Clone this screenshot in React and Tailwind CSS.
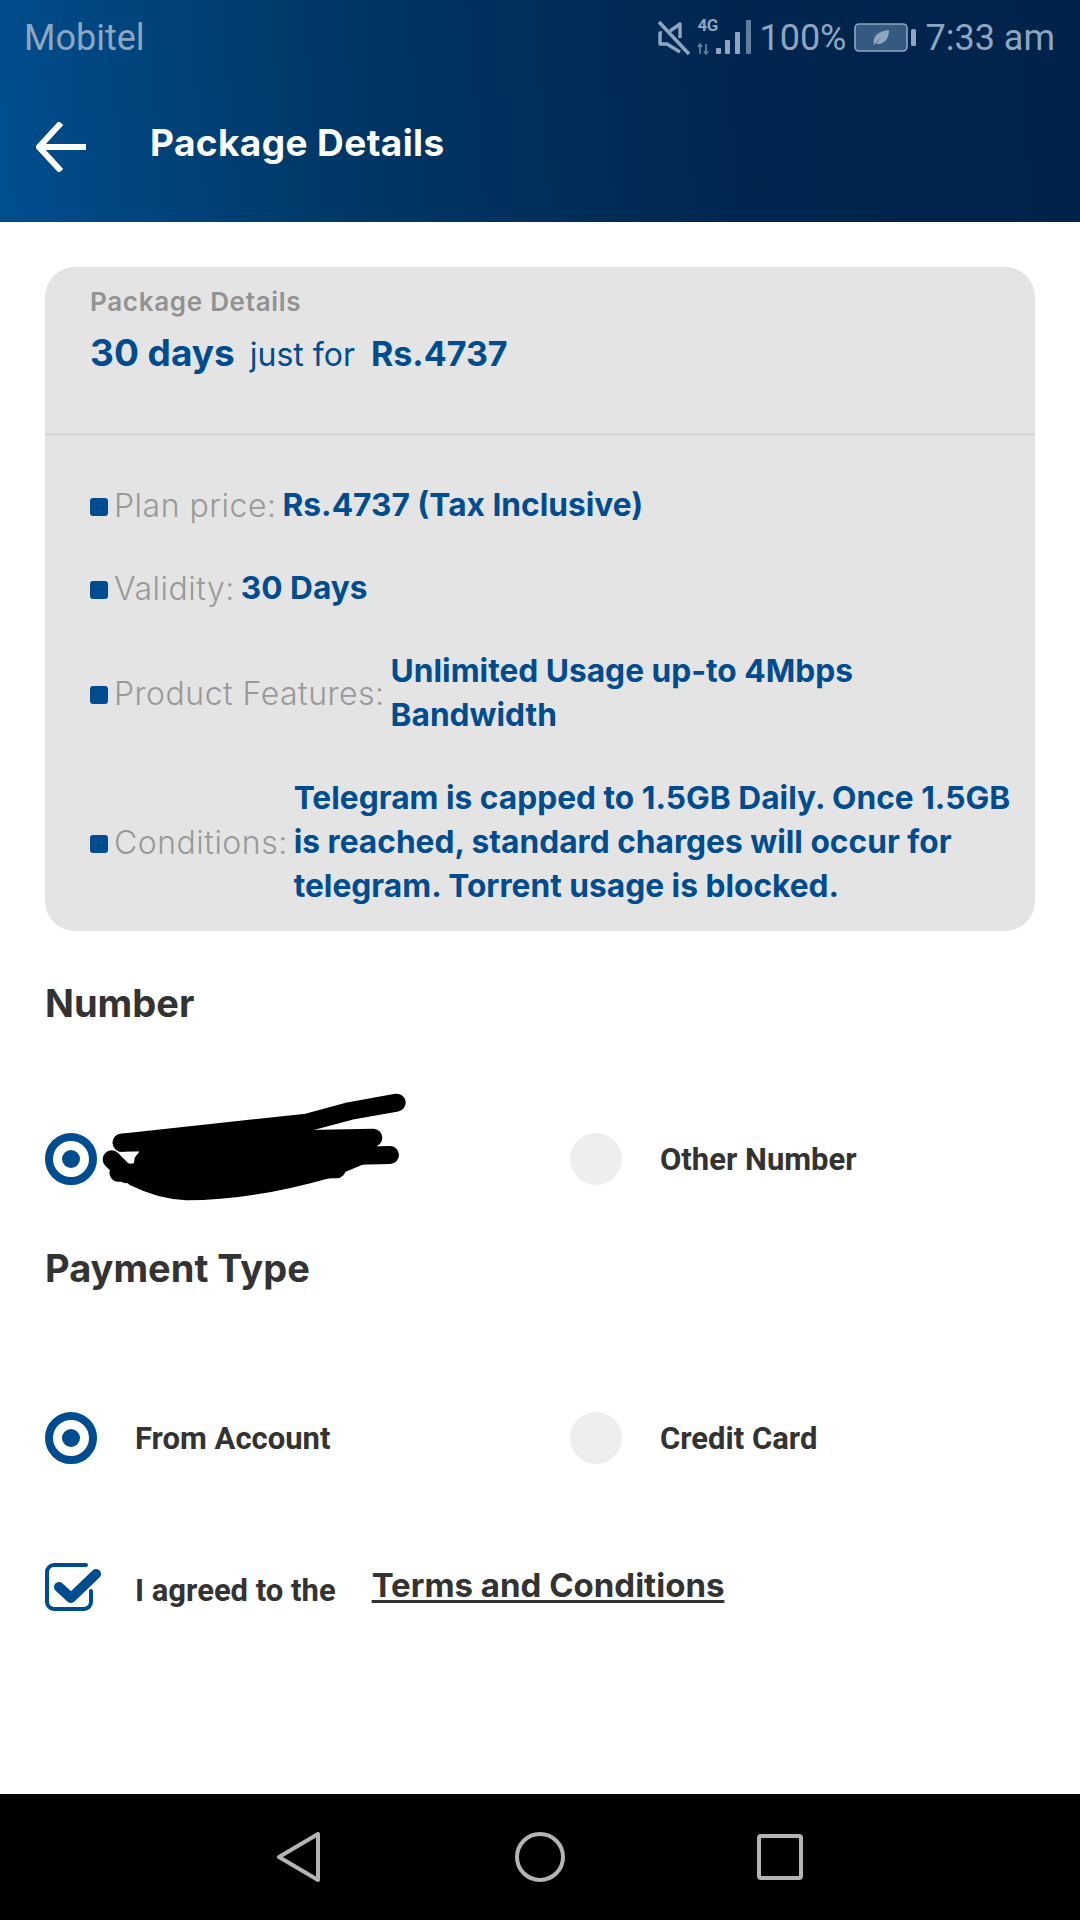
import React from 'react';

const heading = "font-['Inter','Noto_Sans',sans-serif]";
const label = "font-['Roboto',sans-serif]";

function SelectedRadio() {
    return (
        <div className="w-[52px] h-[52px] shrink-0 rounded-full border-[8px] border-[#004c91] flex items-center justify-center">
            <div className="w-[18px] h-[18px] rounded-full bg-[#004c91]"></div>
        </div>
    );
}

function EmptyRadio() {
    return <div className="w-[52px] h-[52px] shrink-0 rounded-full bg-[#eeeeee]"></div>;
}

function StatusIcons() {
    return (
        <div className="flex items-center text-[#8fa6c0]">
            {/* muted speaker */}
            <svg width="34" height="36" viewBox="0 0 34 36" fill="none" stroke="currentColor" strokeWidth="3.4" className="mr-[6px]">
                <path d="M2 2 L32 34" />
                <path d="M5 13 H3 V24 H10 L23 32 M13 11 L23 4 V18" strokeLinejoin="round" />
            </svg>
            {/* network type and signal bars */}
            <div className="relative w-[55px] h-[36px] mr-[7px]">
                <span className="absolute left-0 top-[-4px] text-[17px] font-bold leading-[18px] tracking-[-0.5px] font-['Roboto',sans-serif]">4G</span>
                <svg width="55" height="36" viewBox="0 0 55 36" className="absolute inset-0">
                    <path d="M3 34 V24 M1 27 L3 24 L5 27 M9 24 V34 M7 31 L9 34 L11 31" fill="none" stroke="#5f7d9c" strokeWidth="1.8" />
                    <rect x="19" y="28" width="5" height="6" rx="1" fill="currentColor" />
                    <rect x="28" y="20" width="5" height="14" rx="1" fill="currentColor" />
                    <rect x="38" y="12" width="5" height="22" rx="1" fill="currentColor" />
                    <rect x="49" y="0" width="5" height="34" rx="1" fill="#5f7d9c" />
                </svg>
            </div>
            <span className="text-[36px] leading-none mr-[7px] font-['Roboto',sans-serif] font-normal">100%</span>
            {/* battery with power saving leaf */}
            <svg width="62" height="30" viewBox="0 0 62 30" className="mr-[10px]">
                <rect x="1" y="1" width="52" height="27" rx="4" fill="#355a80" stroke="currentColor" strokeWidth="1.6" />
                <rect x="57" y="6" width="5" height="17" rx="1.5" fill="currentColor" />
                <path d="M20 22 C18 12 26 8 35 7 C35 16 30 22 22 21 L27 14" fill="currentColor" />
            </svg>
            <span className="text-[36px] leading-none font-['Roboto',sans-serif] font-normal">7:33 am</span>
        </div>
    );
}

function DetailRow({ name, children }) {
    return (
        <div className="flex items-center">
            <div className="w-[18px] h-[18px] rounded-[3px] bg-[#004c91] shrink-0 translate-y-[2px]"></div>
            <span className={`${heading} ml-[6px] translate-y-[1px] text-[32px] leading-[44px] font-light text-[#999999] whitespace-nowrap tracking-[0.5px]`}>{name}</span>
            <div className={`${heading} ml-[6px] text-[31.7px] leading-[44px] font-bold text-[#004c91] whitespace-nowrap`}>
                {children}
            </div>
        </div>
    );
}

export default function App() {
    return (
        <div className="h-[1920px] w-[1080px] flex flex-col bg-white overflow-hidden">
            {/* App bar */}
            <div className="h-[222px] shrink-0 bg-[linear-gradient(85deg,#004e8e_0%,#003766_32%,#00264f_68%,#00234a_100%)]">
                <div className="h-[76px] flex items-center justify-between pl-[24px] pr-[25px]">
                    <span className={`${label} text-[36px] text-[#8fa6c0]`}>Mobitel</span>
                    <StatusIcons />
                </div>
                <div className="flex items-center h-[134px] pl-[36px]">
                    <svg width="50" height="50" viewBox="0 0 50 50" fill="none" stroke="white" strokeWidth="6" className="mt-[8px]">
                        <path d="M50 25 H4 M25 1 L3 25 L25 49" />
                    </svg>
                    <span className={`${heading} ml-[64px] text-[37px] font-bold text-white tracking-[0.4px]`}>Package Details</span>
                </div>
            </div>

            <div className="flex-1 px-[45px] pt-[45px]">
                {/* Package summary card */}
                <div className="h-[664px] rounded-[30px] bg-[#e4e4e4]">
                    <div className="h-[169px] border-b-[3px] border-[#d8d8d8] px-[45px] pt-[18px]">
                        <div className={`${heading} text-[26px] leading-[34px] font-semibold text-[#929292] tracking-[0.7px]`}>Package Details</div>
                        <div className={`${heading} mt-[9px] flex items-baseline text-[#004c91]`}>
                            <span className="text-[37px] leading-[50px] font-bold">30 days</span>
                            <span className="ml-[15px] text-[32px] font-normal">just for</span>
                            <span className="ml-[16px] text-[34px] leading-[50px] font-bold">Rs.4737</span>
                        </div>
                    </div>
                    <div className="flex flex-col gap-[39px] pt-[47px] px-[45px]">
                        <DetailRow name="Plan price:">Rs.4737 (Tax Inclusive)</DetailRow>
                        <DetailRow name="Validity:">30 Days</DetailRow>
                        <DetailRow name="Product Features:">
                            Unlimited Usage up-to 4Mbps<br />Bandwidth
                        </DetailRow>
                        <DetailRow name="Conditions:">
                            Telegram is capped to 1.5GB Daily. Once 1.5GB<br />
                            is reached, standard charges will occur for<br />
                            telegram. Torrent usage is blocked.
                        </DetailRow>
                    </div>
                </div>

                <h2 className={`${heading} mt-[47px] text-[38px] leading-[50px] font-bold text-[#333333]`}>Number</h2>

                <div className="relative mt-[105px] grid grid-cols-[525px_1fr] items-center">
                    <SelectedRadio />
                    <div className="flex items-center">
                        <EmptyRadio />
                        <span className={`${label} ml-[38px] mt-[2px] text-[31px] font-bold text-[#333333]`}>Other Number</span>
                    </div>
                    {/* marker strokes hiding the phone number */}
                    <svg width="400" height="150" viewBox="0 0 1200 450" className="absolute left-[-15px] top-[-62px]" fill="none" stroke="black" strokeWidth="54" strokeLinecap="round" strokeLinejoin="round">
                        <path d="M275 215 L830 155 L960 120 L1100 95" />
                        <path d="M275 215 L1030 200" />
                        <path d="M245 265 L290 310" />
                        <path d="M340 270 L1080 252" />
                        <path d="M265 305 L920 295" />
                        <path d="M350 240 L1020 205 L1020 250 L900 300 C760 340 620 368 470 368 C400 365 350 345 310 325 Z" fill="black" strokeWidth="40" />
                    </svg>
                </div>

                <h2 className={`${heading} mt-[58px] text-[38px] leading-[50px] font-bold text-[#333333]`}>Payment Type</h2>

                <div className="mt-[119px] grid grid-cols-[525px_1fr] items-center">
                    <div className="flex items-center">
                        <SelectedRadio />
                        <span className={`${label} ml-[38px] mt-[2px] text-[31px] font-bold text-[#333333]`}>From Account</span>
                    </div>
                    <div className="flex items-center">
                        <EmptyRadio />
                        <span className={`${label} ml-[38px] mt-[2px] text-[31px] font-bold text-[#333333]`}>Credit Card</span>
                    </div>
                </div>

                <div className="mt-[99px] flex items-center h-[50px]">
                    <svg width="56" height="48" viewBox="0 0 56 48" fill="none" className="shrink-0 mt-[-2px]">
                        <path d="M41 2 H9 A7 7 0 0 0 2 9 V39 A7 7 0 0 0 9 46 H39 A7 7 0 0 0 46 39 V28" stroke="#004c91" strokeWidth="4" strokeLinecap="round" />
                        <path d="M14 24 L26 35 L51 11" stroke="#004c91" strokeWidth="10" strokeLinecap="round" strokeLinejoin="round" />
                    </svg>
                    <span className={`${label} ml-[34px] text-[31px] font-bold text-[#333333] mt-[6px]`}>I agreed to the</span>
                    <span className={`${heading} ml-[36px] text-[33px] font-bold text-[#333333] underline underline-offset-[3px] mt-[-4px]`}>Terms and Conditions</span>
                </div>
            </div>

            {/* Android navigation bar */}
            <div className="h-[126px] shrink-0 bg-black flex items-start justify-center pt-[38px]">
                <svg width="44" height="50" viewBox="0 0 44 50" fill="none" stroke="#b4b4b4" strokeWidth="4" strokeLinejoin="round" className="mr-[194px]">
                    <path d="M2 25 L41 2 V48 Z" />
                </svg>
                <svg width="50" height="50" viewBox="0 0 50 50" fill="none" stroke="#b4b4b4" strokeWidth="4" className="mr-[192px]">
                    <circle cx="25" cy="25" r="23" />
                </svg>
                <svg width="46" height="46" viewBox="0 0 46 46" fill="none" stroke="#b4b4b4" strokeWidth="4" strokeLinejoin="round" className="mt-[2px]">
                    <rect x="2" y="2" width="42" height="42" rx="2" />
                </svg>
            </div>
        </div>
    );
}
